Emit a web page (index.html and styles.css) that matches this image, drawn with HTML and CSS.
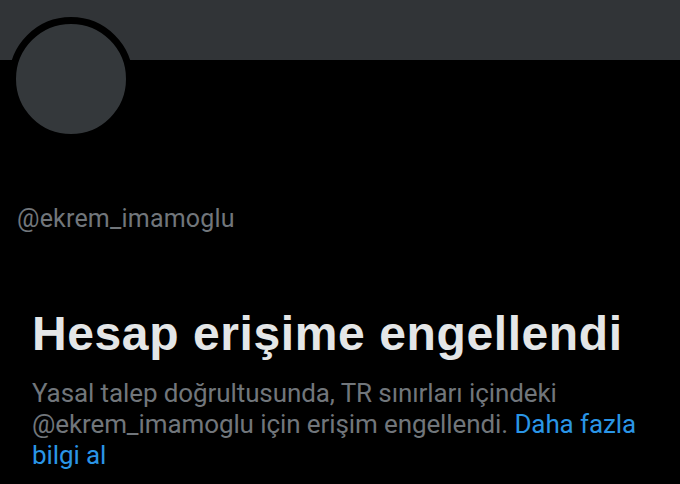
FILE: index.html
```html
<!DOCTYPE html>
<html lang="tr">
<head>
    <meta charset="UTF-8">
    <meta name="viewport" content="width=device-width, initial-scale=1.0">
    <title>@ekrem_imamoglu</title>
    <link rel="stylesheet" href="styles.css">
</head>
<body>
    <div class="profile">
        <div class="banner"></div>
        <div class="avatar-row">
            <div class="avatar"></div>
        </div>
        <div class="handle">@ekrem_imamoglu</div>
        <div class="notice">
            <h1 class="notice-title">Hesap erişime engellendi</h1>
            <p class="notice-text">Yasal talep doğrultusunda, TR sınırları içindeki @ekrem_imamoglu için erişim engellendi. <a href="#" class="more">Daha fazla bilgi al</a></p>
        </div>
    </div>
</body>
</html>
```

FILE: styles.css
```css
body { margin: 0; background-color: #000; font-family: Roboto, "Liberation Sans", sans-serif; overflow: hidden; }
.profile { width: 680px; height: 484px; background-color: #000; }
.banner { height: 60px; background-color: #313437; }
.avatar-row { display: flex; padding-left: 9px; }
.avatar { width: 110px; height: 110px; margin-top: -43px; border: 7px solid #000; border-radius: 50%; background-color: #34383b; }
.handle { padding-left: 17px; margin-top: 63px; font-size: 25px; letter-spacing: 0.2px; color: #71767b; line-height: 30px; }
.notice { padding: 0 32px; margin-top: 72px; }
.notice-title { margin: 0; font-family: "Liberation Sans", Arial, sans-serif; font-size: 48px; font-weight: 700; letter-spacing: 0.6px; color: #e4e6e7; line-height: 56px; }
.notice-text { margin: 16px 0 0; font-size: 26px; letter-spacing: -0.1px; color: #71767b; line-height: 31px; }
.more { color: #2a95e6; text-decoration: none; }
```
